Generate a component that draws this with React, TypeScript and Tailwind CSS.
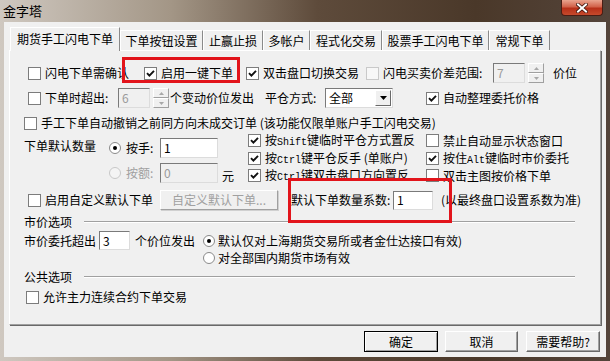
import React from 'react';

// classic win32 dialog pieces
const Box: React.FC<{ checked?: boolean; disabled?: boolean }> = ({ checked, disabled }) => (
  <span
    className={`flex h-[13px] w-[13px] shrink-0 items-center justify-center border ${
      disabled ? 'border-[#c9c9c9] bg-[#f7f7f7]' : 'border-[#7c7c7c] bg-white'
    }`}
  >
    {checked && (
      <svg width="9" height="9" viewBox="0 0 9 9">
        <path d="M1 4.2 L3.4 6.7 L8 1.8" stroke="#111" strokeWidth="1.9" fill="none" />
      </svg>
    )}
  </span>
);

const CheckItem: React.FC<{ className?: string; checked?: boolean; disabled?: boolean; children: React.ReactNode }> = ({
  className = '',
  checked,
  disabled,
  children,
}) => (
  <div className={`flex shrink-0 items-center gap-[4px] ${className}`}>
    <Box checked={checked} disabled={disabled} />
    <span className="whitespace-nowrap leading-[14px]">{children}</span>
  </div>
);

// latin key names are drawn in a fixed-width 6px face in the original
const Key: React.FC<{ children: React.ReactNode }> = ({ children }) => (
  <span className="font-['Liberation_Mono',monospace] text-[10px] leading-none">{children}</span>
);

const Radio: React.FC<{ checked?: boolean; disabled?: boolean }> = ({ checked, disabled }) => (
  <span
    className={`flex h-[12px] w-[12px] shrink-0 items-center justify-center rounded-full border ${
      disabled ? 'border-[#c8c8c8] bg-[#f4f4f4]' : 'border-[#8a8a8a] bg-white'
    }`}
  >
    {checked && <span className="h-[4px] w-[4px] rounded-full bg-black" />}
  </span>
);

const Field: React.FC<{ value: string; className?: string; disabled?: boolean }> = ({ value, className = '', disabled }) => (
  <div
    className={`flex shrink-0 items-center border border-t-[#7a7a7a] border-l-[#7a7a7a] border-r-[#dcdcdc] border-b-[#dcdcdc] pl-[3px] ${
      disabled ? 'bg-[#f0f0f0] text-[#9a9a9a]' : 'bg-white text-black'
    } ${className}`}
  >
    {value}
  </div>
);

const Spin = () => (
  <div className="ml-[3px] flex h-[20px] w-[16px] shrink-0 flex-col">
    {[0, 1].map((i) => (
      <div
        key={i}
        className="flex flex-1 items-center justify-center border border-t-white border-l-white border-r-[#a0a0a0] border-b-[#a0a0a0] bg-[#f0f0f0]"
      >
        <svg width="5" height="3" viewBox="0 0 5 3">
          <path d={i === 0 ? 'M0 3 L2.5 0 L5 3Z' : 'M0 0 L2.5 3 L5 0Z'} fill="#a8a8a8" />
        </svg>
      </div>
    ))}
  </div>
);

const Section: React.FC<{ label: string }> = ({ label }) => (
  <div className="flex h-[14px] items-center">
    <span className="w-[60px] whitespace-nowrap">{label}</span>
    <div className="h-[2px] w-[491px] border-t border-b border-t-[#a0a0a0] border-b-white" />
  </div>
);

const tabs = [
  { label: '期货手工闪电下单', w: 'w-[110px]', active: true },
  { label: '下单按钮设置', w: 'w-[83px]' },
  { label: '止赢止损', w: 'w-[60px]' },
  { label: '多帐户', w: 'w-[47px]' },
  { label: '程式化交易', w: 'w-[72px]' },
  { label: '股票手工闪电下单', w: 'w-[107px]' },
  { label: '常规下单', w: 'w-[61px]' },
];

export default function App() {
  return (
    <div className="relative flex h-[361px] w-[610px] flex-col overflow-hidden bg-[linear-gradient(90deg,#cfc8c0_0%,#a39686_28%,#5e4b3b_52%,#4a3829_78%,#54443a_100%)] font-['Noto_Sans_CJK_SC',sans-serif] text-[12px] leading-[14px] text-black">
      {/* title bar */}
      <div className="flex h-[22px] shrink-0 items-start justify-between">
        <span className="ml-[3px] mt-[3px] text-[13px] leading-[16px] text-black">金字塔</span>
        <div className="mr-[7px] flex h-[16px] w-[42px] items-center justify-center rounded-b-[4px] border border-t-0 border-[#4a1d14] bg-[linear-gradient(180deg,#e9a48f_0%,#d2624a_45%,#b73019_55%,#c64a2c_100%)]">
          <svg width="12" height="10" viewBox="0 0 12 10">
            <path d="M2 1.5 L10 8.5 M10 1.5 L2 8.5" stroke="#3b140c" strokeWidth="3.6" strokeLinecap="square" />
            <path d="M2 1.5 L10 8.5 M10 1.5 L2 8.5" stroke="#ffffff" strokeWidth="2" strokeLinecap="square" />
          </svg>
        </div>
      </div>

      {/* client area */}
      <div className="ml-[4px] flex h-[335px] w-[602px] flex-col bg-[#f0f0f0]">
        {/* tab strip */}
        <div className="flex h-[28px] items-end pl-[6px]">
          {tabs.map((t) =>
            t.active ? (
              <div
                key={t.label}
                className={`relative z-10 mb-[-1px] flex h-[24px] ${t.w} shrink-0 items-center justify-center border-t border-l border-r border-t-white border-l-white border-r-[#8a8a8a] bg-[#f0f0f0] pb-[2px] whitespace-nowrap`}
              >
                {t.label}
              </div>
            ) : (
              <div
                key={t.label}
                className={`flex h-[20px] ${t.w} shrink-0 items-center justify-center border-t border-l border-r border-t-white border-l-white border-r-[#8a8a8a] whitespace-nowrap`}
              >
                {t.label}
              </div>
            )
          )}
        </div>

        {/* tab panel */}
        <div className="ml-[5px] flex h-[275px] w-[592px] flex-col border border-t-white border-l-white border-r-[#a0a0a0] border-b-[#a0a0a0] pl-[14px] pt-[12px] shadow-[1px_1px_0_#696969]">
          {/* row 1 */}
          <div className="flex h-[20px] items-center pl-[4px]">
            <CheckItem className="w-[116px]">闪电下单需确认</CheckItem>
            <CheckItem className="w-[102px]" checked>
              启用一键下单
            </CheckItem>
            <CheckItem className="w-[120px]" checked>
              双击盘口切换交易
            </CheckItem>
            <CheckItem className="w-[127px]" disabled>
              闪电买卖价差范围:
            </CheckItem>
            <Field value="7" disabled className="h-[20px] w-[32px]" />
            <Spin />
            <span className="ml-[9px] whitespace-nowrap">价位</span>
          </div>

          {/* row 2 */}
          <div className="mt-[5px] flex h-[20px] items-center pl-[4px]">
            <CheckItem className="w-[90px]">下单时超出:</CheckItem>
            <Field value="6" disabled className="h-[20px] w-[32px]" />
            <Spin />
            <span className="ml-[1px] w-[95px] whitespace-nowrap">个变动价位发出</span>
            <span className="w-[60px] whitespace-nowrap">平仓方式:</span>
            <div className="flex h-[20px] w-[68px] shrink-0 items-center border border-t-[#7a7a7a] border-l-[#7a7a7a] border-r-[#dcdcdc] border-b-[#dcdcdc] bg-white">
              <span className="flex-1 pl-[3px]">全部</span>
              <div className="mr-[1px] flex h-[16px] w-[16px] items-center justify-center border border-t-white border-l-white border-r-[#696969] border-b-[#696969] bg-[#f0f0f0]">
                <svg width="7" height="4" viewBox="0 0 7 4">
                  <path d="M0 0 L3.5 4 L7 0Z" fill="#000" />
                </svg>
              </div>
            </div>
            <CheckItem className="ml-[33px]" checked>
              自动整理委托价格
            </CheckItem>
          </div>

          {/* row 3 */}
          <div className="mt-[7px] flex h-[16px] items-center">
            <CheckItem>手工下单自动撤销之前同方向未成交订单 (该功能仅限单账户手工闪电交易)</CheckItem>
          </div>

          {/* default quantity + hotkey options */}
          <div className="mt-[1px] flex h-[52px]">
            <div className="flex w-[224px] shrink-0 flex-col">
              <div className="mt-[6px] flex h-[20px] items-center">
                <span className="mb-[5px] w-[85px] whitespace-nowrap">下单默认数量</span>
                <div className="flex w-[51px] items-center gap-[5px]">
                  <Radio checked />
                  <span>按手:</span>
                </div>
                <Field value="1" className="h-[20px] w-[58px]" />
              </div>
              <div className="mt-[5px] flex h-[20px] items-center pl-[85px]">
                <div className="flex w-[51px] items-center gap-[5px] text-[#a0a0a0]">
                  <Radio disabled />
                  <span>按额:</span>
                </div>
                <Field value="0" disabled className="h-[20px] w-[58px]" />
                <span className="ml-[4px] mt-[6px]">元</span>
              </div>
            </div>
            <div className="flex flex-col">
              <div className="flex h-[17px] items-center">
                <CheckItem className="w-[178px]" checked>
                  按<Key>Shift</Key>键临时平仓方式置反
                </CheckItem>
                <CheckItem>禁止自动显示状态窗口</CheckItem>
              </div>
              <div className="flex h-[18px] items-center">
                <CheckItem className="w-[178px]" checked>
                  按<Key>Ctrl</Key>键平仓反手 (单账户)
                </CheckItem>
                <CheckItem checked>
                  按住<Key>Alt</Key>键临时市价委托
                </CheckItem>
              </div>
              <div className="flex h-[17px] items-center">
                <CheckItem className="w-[178px]" checked>
                  按<Key>Ctrl</Key>键双击盘口方向置反
                </CheckItem>
                <CheckItem>双击主图按价格下单</CheckItem>
              </div>
            </div>
          </div>

          {/* custom default order */}
          <div className="mt-[6px] flex h-[20px] items-center pl-[4px]">
            <CheckItem className="w-[132px]">启用自定义默认下单</CheckItem>
            <div className="flex h-[20px] w-[118px] shrink-0 items-center justify-center border border-t-white border-l-white border-r-[#a0a0a0] border-b-[#a0a0a0] text-[#a0a0a0] shadow-[1px_1px_0_#d0d0d0]">
              自定义默认下单...
            </div>
            <span className="ml-[13px] w-[102px] whitespace-nowrap">默认下单数量系数:</span>
            <Field value="1" className="h-[19px] w-[40px]" />
            <span className="ml-[8px] whitespace-nowrap">(以最终盘口设置系数为准)</span>
          </div>

          {/* market price */}
          <div className="mt-[5px]">
            <Section label="市价选项" />
          </div>
          <div className="mt-[2px] flex h-[19px] items-center">
            <span className="w-[75px] whitespace-nowrap">市价委托超出</span>
            <Field value="3" className="h-[19px] w-[31px]" />
            <span className="ml-[5px] w-[68px] whitespace-nowrap">个价位发出</span>
            <div className="flex items-center gap-[3px]">
              <Radio checked />
              <span className="whitespace-nowrap">默认仅对上海期货交易所或者金仕达接口有效)</span>
            </div>
          </div>
          <div className="flex h-[16px] items-center pl-[179px]">
            <div className="flex items-center gap-[3px]">
              <Radio />
              <span className="whitespace-nowrap">对全部国内期货市场有效</span>
            </div>
          </div>

          {/* common */}
          <div className="mt-[4px]">
            <Section label="公共选项" />
          </div>
          <div className="mt-[5px] flex h-[16px] items-center pl-[2px]">
            <CheckItem>允许主力连续合约下单交易</CheckItem>
          </div>
        </div>

        {/* dialog buttons */}
        <div className="mt-[6px] flex h-[21px] items-center">
          <div className="ml-[360px] flex h-[21px] w-[74px] items-center justify-center border border-black bg-[#f0f0f0] shadow-[inset_1px_1px_0_#ffffff,inset_-1px_-1px_0_#a0a0a0]">
            确定
          </div>
          <div className="ml-[7px] flex h-[21px] w-[73px] items-center justify-center border border-t-white border-l-white border-r-[#696969] border-b-[#696969] bg-[#f0f0f0] shadow-[inset_-1px_-1px_0_#a0a0a0]">
            取消
          </div>
          <div className="ml-[8px] flex h-[21px] w-[74px] items-center justify-center border border-t-white border-l-white border-r-[#696969] border-b-[#696969] bg-[#f0f0f0] shadow-[inset_-1px_-1px_0_#a0a0a0]">
            需要帮助?
          </div>
        </div>
      </div>

      {/* red annotation frames drawn over the screenshot */}
      <div className="absolute left-[122px] top-[57px] h-[26px] w-[118px] border-[3px] border-[#e2141b]" />
      <div className="absolute left-[288px] top-[178px] h-[45px] w-[164px] border-[3px] border-[#e2141b]" />
    </div>
  );
}
